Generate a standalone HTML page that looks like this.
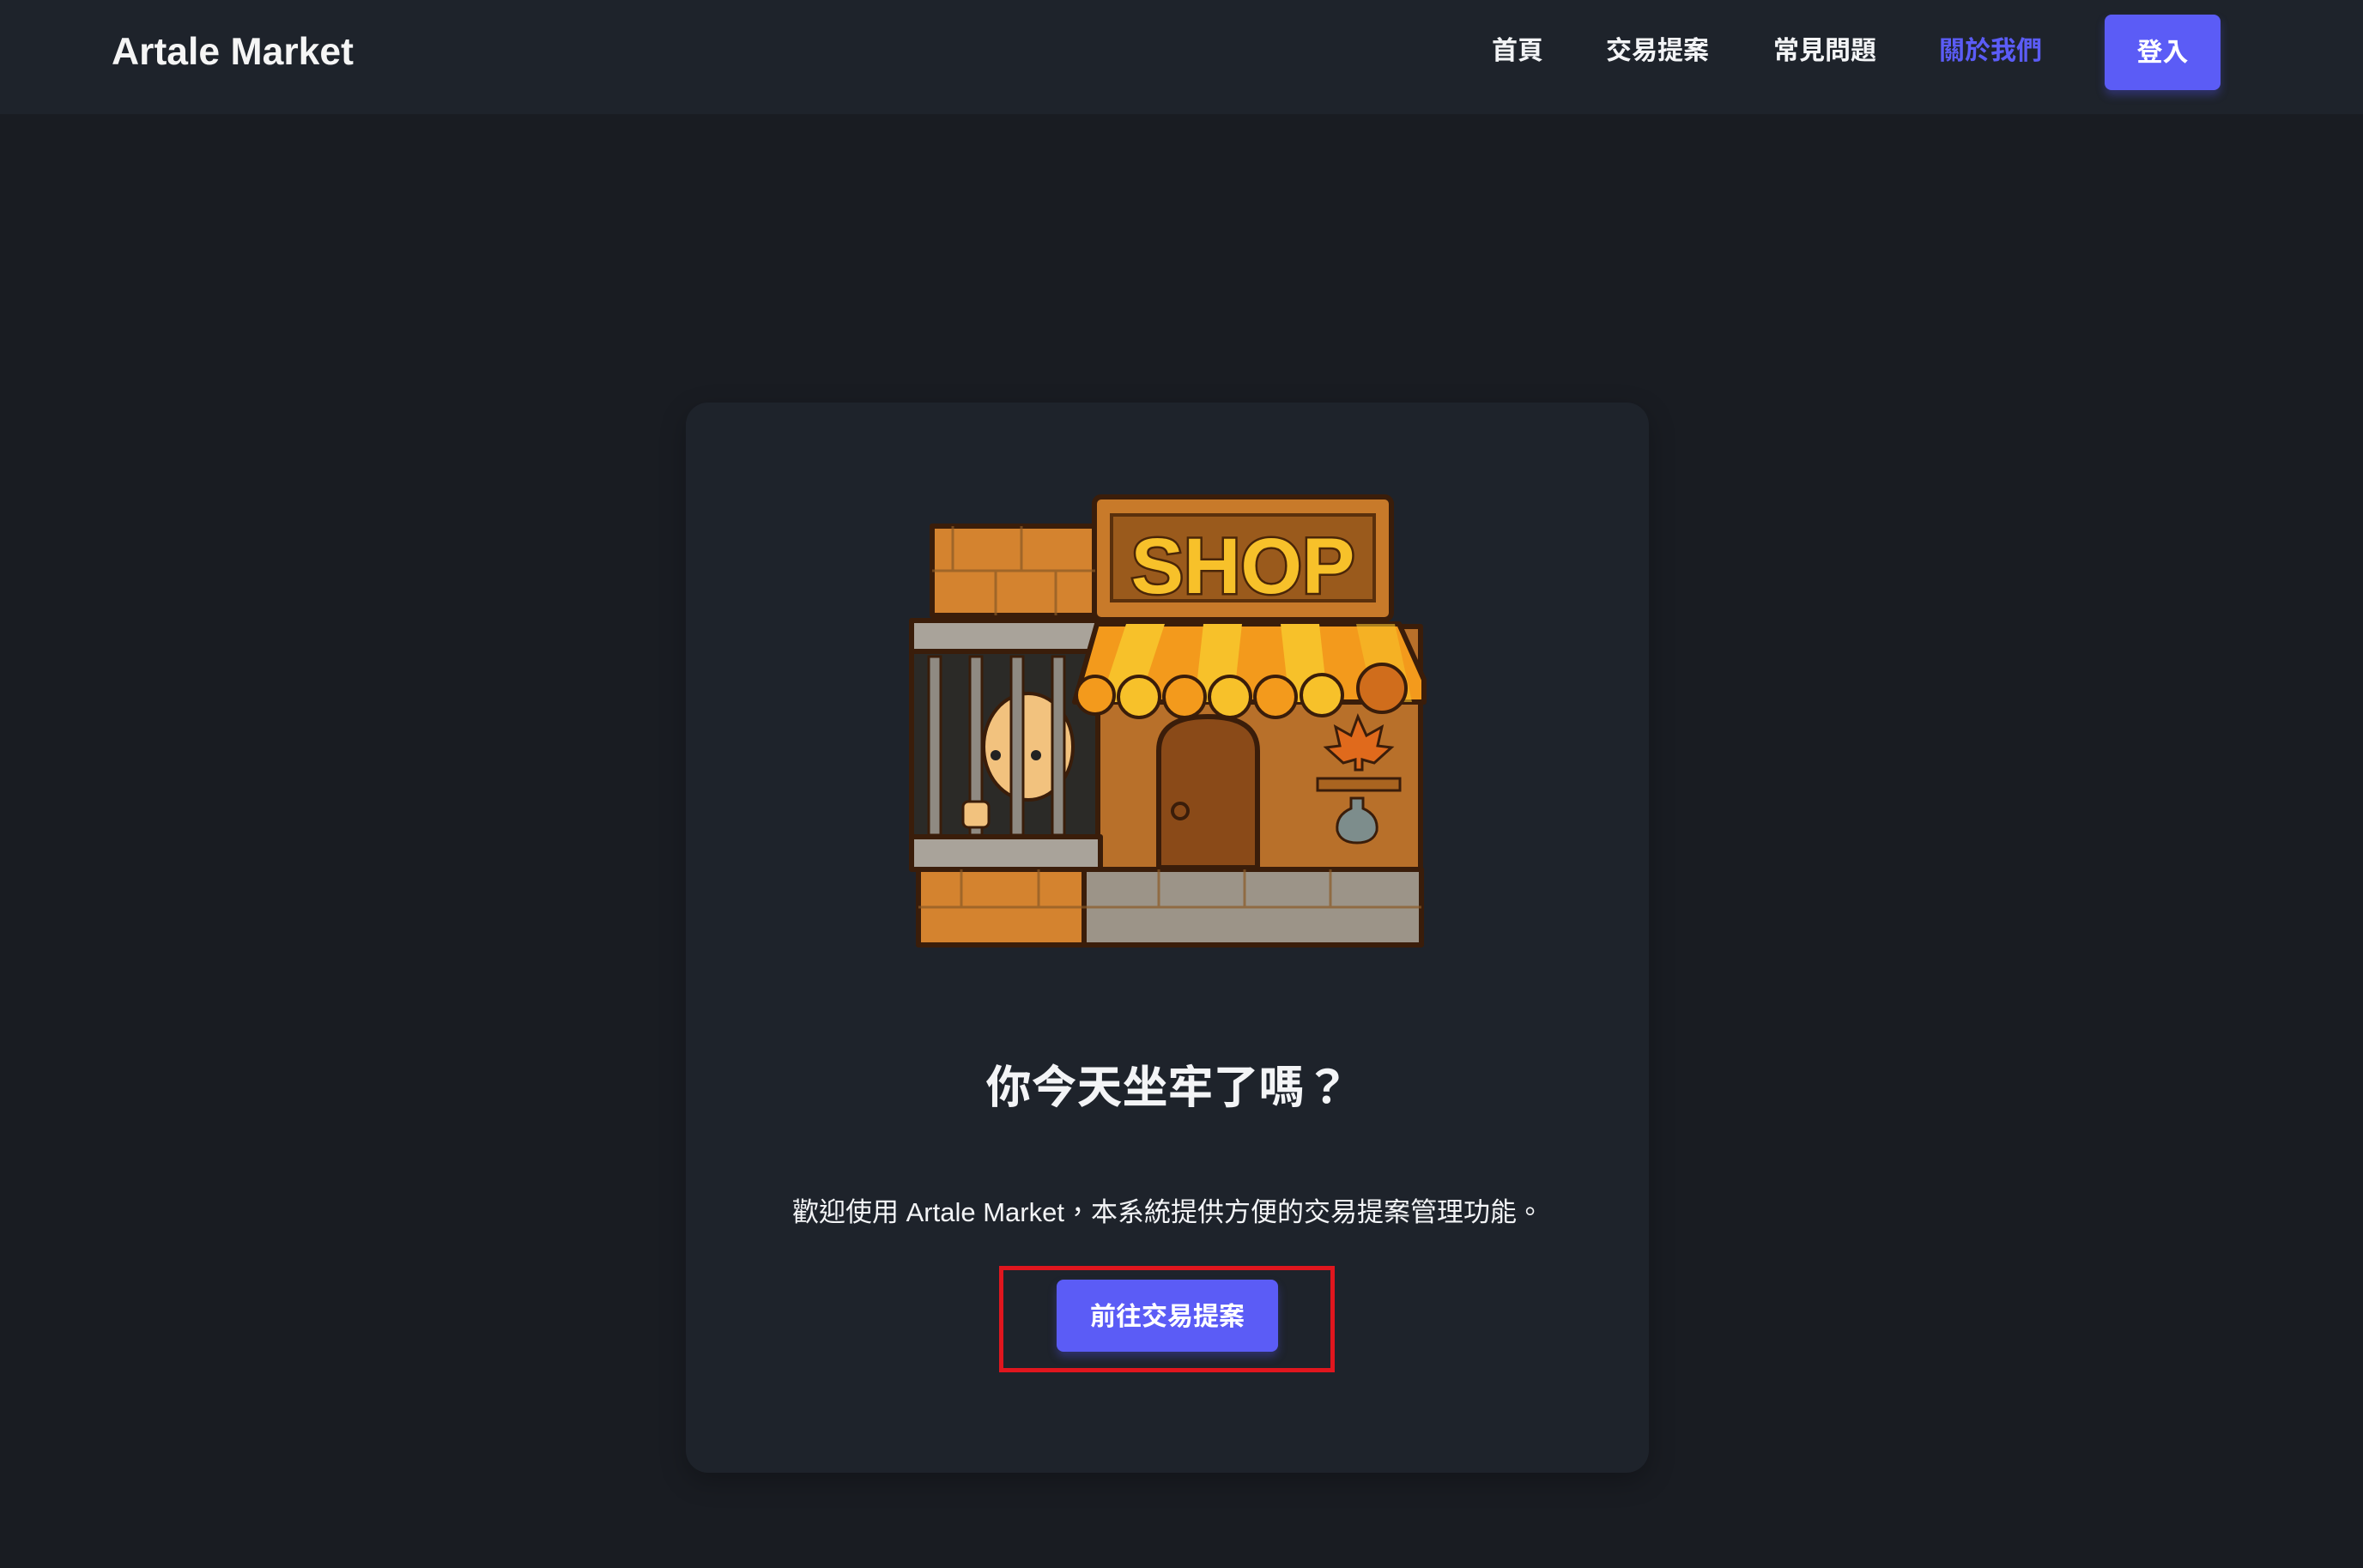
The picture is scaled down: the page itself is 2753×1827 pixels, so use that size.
<!DOCTYPE html>
<html><head><meta charset="utf-8"><style>
*{margin:0;padding:0;box-sizing:border-box}
body{width:2753px;height:1827px;background:#191c22;font-family:"Liberation Sans","Noto Sans CJK TC",sans-serif;color:#f3f4f6;position:relative;overflow:hidden}
.hdr{position:absolute;left:0;top:0;width:2753px;height:133px;background:#1e232b}
.logo{position:absolute;left:130px;top:36px;font-size:44.5px;font-weight:bold;line-height:50px;color:#f5f5f5}
.nav{position:absolute;top:40px;font-size:30px;font-weight:bold;line-height:40px;color:#f3f4f6}
.btn{position:absolute;background:#5b5cf6;color:#fff;font-weight:bold;border-radius:8px;display:flex;align-items:center;justify-content:center;box-shadow:0 6px 10px rgba(80,80,230,.35)}
.card{position:absolute;left:799px;top:469px;width:1122px;height:1247px;background:#1e232b;border-radius:26px;box-shadow:0 10px 30px rgba(0,0,0,.25)}
.t{position:absolute;left:-16px;width:2753px;text-align:center;font-weight:bold}
</style></head><body>
<div class="hdr"></div>
<div class="logo">Artale Market</div>
<div class="nav" style="left:1738px">首頁</div>
<div class="nav" style="left:1871px">交易提案</div>
<div class="nav" style="left:2066px">常見問題</div>
<div class="nav" style="left:2259px;color:#5b5cf6">關於我們</div>
<div class="btn" style="left:2452px;top:17px;width:135px;height:88px;font-size:30px;padding-bottom:6px">登入</div>
<div class="card"></div>
<svg style="position:absolute;left:1050px;top:570px" width="620" height="540" viewBox="0 0 620 540">
<g stroke="#3a1d0a" stroke-width="6" stroke-linejoin="round">
<rect x="36" y="43" width="192" height="104" fill="#d4832f"/>
<rect x="221" y="160" width="384" height="286" fill="#b8702a"/>
<rect x="12" y="189" width="217" height="216" fill="#2b2a27"/>
<rect x="12" y="153" width="218" height="36" fill="#a9a39a"/>
<rect x="12" y="405" width="220" height="38" fill="#a9a39a"/>
<rect x="20" y="443" width="200" height="88" fill="#d4832f"/>
<rect x="213" y="443" width="393" height="88" fill="#9c9488"/>
<rect x="225" y="9" width="346" height="143" rx="8" fill="#c87a2a"/>
<path d="M300 441V305Q300 265 357 265Q415 265 415 305V441Z" fill="#8a4a18"/>
<path d="M202 248L228 157H580L609 222V248Z" fill="#f39a1c"/>
</g>
<rect x="245" y="30" width="306" height="100" fill="#9a5a1c" stroke="#5a300c" stroke-width="4"/>
<g fill="#f7c12a"><path d="M262 157h45l-30 91h-45z"/><path d="M352 157h45l-10 91h-45z"/><path d="M442 157h45l10 91h-45z"/><path d="M530 157h45l20 91h-45z" opacity=".6"/></g>
<g fill="#f39a1c" stroke="#3a1d0a" stroke-width="4"><circle cx="226" cy="240" r="22"/><circle cx="277" cy="242" r="24" fill="#f7c12a"/><circle cx="330" cy="242" r="24"/><circle cx="383" cy="242" r="24" fill="#f7c12a"/><circle cx="436" cy="242" r="24"/><circle cx="490" cy="240" r="24" fill="#f7c12a"/><circle cx="560" cy="232" r="28" fill="#d06d1c"/></g>
<text x="398" y="121" text-anchor="middle" font-family="Liberation Sans,sans-serif" font-weight="bold" font-size="92" fill="#f7c12a" stroke="#4a2608" stroke-width="5" paint-order="stroke">SHOP</text>
<ellipse cx="148" cy="300" rx="52" ry="62" fill="#f2c27e" stroke="#3a1d0a" stroke-width="4"/>
<circle cx="110" cy="310" r="6" fill="#222"/><circle cx="157" cy="310" r="6" fill="#222"/>
<g fill="#8f8a82" stroke="#3a1d0a" stroke-width="3"><rect x="32" y="195" width="14" height="208"/><rect x="80" y="195" width="14" height="208"/><rect x="128" y="195" width="14" height="208"/><rect x="176" y="195" width="14" height="208"/></g>
<rect x="72" y="364" width="30" height="30" rx="6" fill="#f2c27e" stroke="#3a1d0a" stroke-width="3"/>
<circle cx="325" cy="375" r="9" fill="none" stroke="#3a1d0a" stroke-width="4"/>
<rect x="485" y="337" width="96" height="14" fill="#a96420" stroke="#3a1d0a" stroke-width="3"/>
<path d="M532 265l10 22 18-10-5 22 16 2-20 18-14-4v12h-8v-12l-14 4-20-18 16-2-5-22 18 10z" fill="#e06a1c" stroke="#3a1d0a" stroke-width="3"/>
<path d="M524 360h14v12q18 8 16 26q-4 14-23 14q-19 0-23-14q-2-18 16-26z" fill="#7d8d8c" stroke="#3a1d0a" stroke-width="3"/>
<g stroke="#8b5a26" stroke-width="3" opacity=".7"><path d="M36 95h190M60 43v52M140 43v52M110 95v52M180 95v52M20 487h200M70 443v44M160 443v44M213 487h393M300 443v44M400 443v44M500 443v44"/></g>
</svg>
<div class="t" style="top:1236px;font-size:53px;line-height:64px">你今天坐牢了嗎？</div>
<div class="t" style="top:1393px;font-size:31px;line-height:40px;font-weight:normal">歡迎使用 Artale Market，本系統提供方便的交易提案管理功能。</div>
<div style="position:absolute;left:1164px;top:1475px;width:391px;height:124px;border:5px solid #e0161e"></div>
<div class="btn" style="left:1231px;top:1491px;width:258px;height:84px;font-size:30px;padding-bottom:4px">前往交易提案</div>
</body></html>
